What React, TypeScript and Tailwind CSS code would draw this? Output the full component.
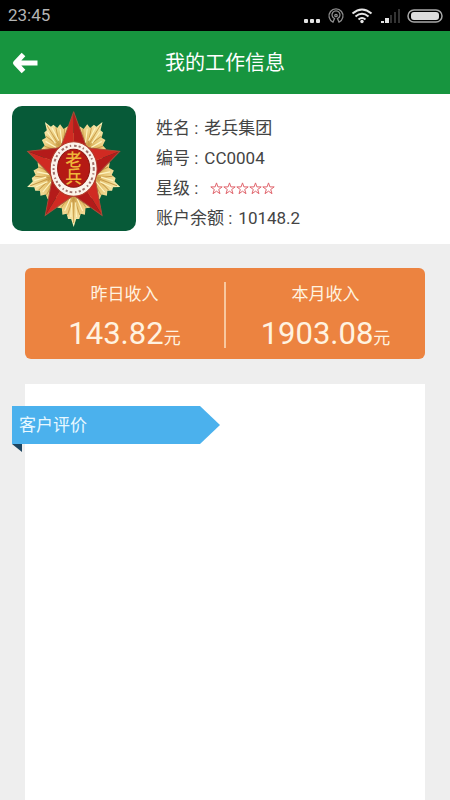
import React from "react";

const turns = [0, 72, 144, 216, 288];

function Medal() {
  return (
    <svg viewBox="38 33 370 375" preserveAspectRatio="none" className="block h-[125px] w-[124px] shrink-0 rounded-[10px] bg-[#075a38]" role="img" aria-label="老兵集团">
      <defs>
        <radialGradient id="leaf" gradientUnits="userSpaceOnUse" cx="0" cy="0" r="170">
          <stop offset="0.4" stopColor="#c08c34" />
          <stop offset="0.65" stopColor="#e8c674" />
          <stop offset="1" stopColor="#faf0b8" />
        </radialGradient>
      </defs>
      <g transform="translate(222 222) scale(.84 1)">
        {turns.map((t) => (
          <g key={t} transform={`rotate(${t})`}>
            <path
              d="M0 174 L-9 150 L-20 150 L-25 134 L-40 137 L-42 118 L-58 116 L-56 96 L-66 84 L-44 40 L44 40 L66 84 L56 96 L58 116 L42 118 L40 137 L25 134 L20 150 L9 150Z"
              fill="url(#leaf)"
            />
            <path d="M0 60V162M0 84L-22 138M0 84L22 138M0 60L-44 116M0 60L44 116" stroke="#c79a48" strokeWidth="3" fill="none" />
            <path d="M-7 100L-10 144M7 100L10 144M-12 88L-32 126M12 88L32 126" stroke="#fdf3c0" strokeWidth="4" fill="none" />
          </g>
        ))}
        {turns.map((t) => (
          <g key={t} transform={`rotate(${t})`}>
            <path d="M0 -172L-48 -60L0 0Z" fill="#d02a22" />
            <path d="M0 -172L48 -60L0 0Z" fill="#b41b1a" />
            <path d="M-48 -60L0 -172L48 -60" fill="none" stroke="#a8503a" strokeWidth="3" />
          </g>
        ))}
      </g>
      <ellipse cx="222" cy="222" rx="70" ry="82" fill="#fbf3ea" stroke="#b23b2a" strokeWidth="3" />
      <ellipse cx="222" cy="222" rx="60" ry="70" fill="none" stroke="#a0706a" strokeWidth="6" strokeDasharray="6 7 4 9 8 6" />
      <ellipse cx="222" cy="220" rx="48" ry="57" fill="#b51a14" stroke="#8e1710" strokeWidth="3" />
      <text
        x="222"
        y="220"
        fill="#efb53a"
        fontSize="50"
        fontWeight="500"
        textAnchor="middle"
        fontFamily="'Noto Sans CJK SC', sans-serif"
        className="[writing-mode:vertical-rl]"
      >
        老兵
      </text>
    </svg>
  );
}

function StatusIcons() {
  return (
    <svg viewBox="0 0 142 20" className="h-5 w-[142px]" aria-hidden="true">
      <g fill="#e4e4e4">
        <rect x="1" y="13" width="4" height="4" rx="1" />
        <rect x="7" y="13" width="4" height="4" rx="1" />
        <rect x="13" y="13" width="4" height="4" rx="1" />
      </g>
      <g fill="none" stroke="#8d8d8d" strokeWidth="1.3">
        <path d="M30 16.2A7 7 0 1 1 36 16.2L34.500 12.500A4 4 0 1 0 31.500 12.500Z" />
        <circle cx="33" cy="9.500" r="1.200" />
      </g>
      <g fill="none" stroke="#e6e6e6" strokeWidth="2">
        <path d="M49.500 7.500Q59 -.5 68.500 7.500" />
        <path d="M52.500 10.500Q59 5 65.500 10.500" />
        <path d="M55.500 13.500Q59 10.500 62.500 13.500" />
      </g>
      <circle cx="59" cy="15.500" r="1.700" fill="#e6e6e6" />
      <g fill="#e4e4e4">
        <rect x="78" y="15" width="3" height="2" />
        <rect x="82" y="12" width="4" height="5" />
      </g>
      <g fill="#333333">
        <rect x="87" y="9" width="2" height="8" />
        <rect x="91" y="6" width="2" height="11" />
        <rect x="95" y="3" width="2" height="14" />
      </g>
      <rect x="105" y="4" width="34" height="12" rx="6" fill="none" stroke="#a9a9a9" strokeWidth="1.500" />
      <rect x="108" y="6" width="28" height="8" rx="3" fill="#dedede" />
    </svg>
  );
}

function Stars() {
  return (
    <span className="ml-[6px] flex" role="img" aria-label="五星">
      {turns.map((t) => (
        <svg key={t} viewBox="0 0 13 13" className="h-[13px] w-[13px]">
          <path d="M6.500 .9L7.900 4.900H12.200L8.700 7.500L10 11.700L6.500 9.200L3 11.700L4.300 7.500L.8 4.900H5.100Z" fill="#fff" stroke="#e0646c" strokeWidth="1" />
        </svg>
      ))}
    </span>
  );
}

function Field({ label, children }: { label: string; children: React.ReactNode }) {
  return (
    <div className="flex items-center gap-[6px]">
      <dt>{label} :</dt>
      <dd>{children}</dd>
    </div>
  );
}

function Income({ label, amount }: { label: string; amount: string }) {
  return (
    <div className="flex-1 text-center">
      <div className="text-[17px] leading-6">{label}</div>
      <div className="mt-3 text-[31px] leading-8">
        {amount}
        <span className="text-[17px]">元</span>
      </div>
    </div>
  );
}

export default function App() {
  return (
    <div className="flex min-h-screen flex-col bg-[#eeeeee] font-[Roboto,'Noto_Sans_CJK_SC',sans-serif] text-[#444444]">
      <div className="flex h-[31px] items-center justify-between bg-black pr-[5px] pl-2">
        <span className="text-[17px] text-[#b4b4b4]">23:45</span>
        <StatusIcons />
      </div>

      <header className="grid h-[63px] grid-cols-[48px_1fr_48px] items-center bg-[#17953f] text-white">
        <button type="button" aria-label="返回" className="flex h-full items-center pl-3">
          <svg viewBox="0 0 26 22" className="h-[22px] w-[26px]" fill="none" stroke="currentColor" strokeWidth="5">
            <path d="M11.500 2.500L3.500 11L11.500 19.500M4 11H25.500" strokeLinejoin="round" />
          </svg>
        </button>
        <h1 className="text-center text-[20px] leading-7">我的工作信息</h1>
      </header>

      <section className="flex items-start gap-5 bg-white px-3 pt-3 pb-[13px]">
        <Medal />
        <dl className="-mb-[2px] pt-[7px] text-[17px] leading-[30px]">
          <Field label="姓名">老兵集团</Field>
          <Field label="编号">CC0004</Field>
          <Field label="星级"><Stars /></Field>
          <Field label="账户余额">10148.2</Field>
        </dl>
      </section>

      <section className="mx-[25px] mt-6 flex items-start rounded-[6px] bg-[#ec8340] pt-[14px] pb-[5px] text-[#fff3e0]">
        <Income label="昨日收入" amount="143.82" />
        <div className="h-[66px] w-[2px] bg-[#f8c79e]" />
        <Income label="本月收入" amount="1903.08" />
      </section>

      <section className="mx-[25px] mt-[25px] flex-1 bg-white pt-[22px]">
        <div className="-ml-[13px] w-[208px]">
          <h2 className="h-[38px] bg-[#4bb1ed] pl-[7px] text-[17px] leading-[38px] text-[#e8f8ff] [clip-path:polygon(0_0,188px_0,100%_50%,188px_100%,0_100%)]">客户评价</h2>
          <div className="h-2 w-[10px] bg-[#1d4560] [clip-path:polygon(0_0,100%_0,100%_100%)]" />
        </div>
      </section>
    </div>
  );
}
